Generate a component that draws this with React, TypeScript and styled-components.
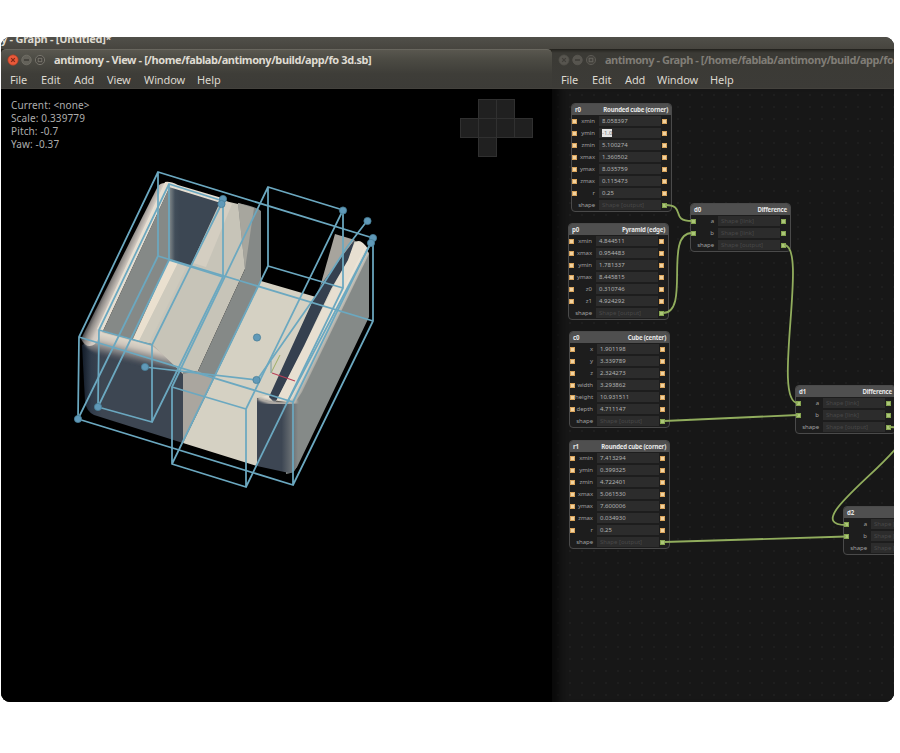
import React from "react";
import styled, { createGlobalStyle } from "styled-components";

const Global = createGlobalStyle`
  html, body { margin: 0; background: #fff; }
  body { font-family: "Noto Sans", "Open Sans", sans-serif; overflow: hidden; }
  * { box-sizing: border-box; }
`;

const Page = styled.div`
  width: 900px;
  height: 753px;
  padding: 37px 0 0 1px;
`;

const Desktop = styled.div`
  width: 893px;
  height: 665px;
  border-radius: 9px;
  overflow: hidden;
  background: #171717;
  display: flex;
  flex-direction: column;
`;

const HiddenTitle = styled.div`
  height: 12px;
  flex: none;
  overflow: hidden;
  background: linear-gradient(#504f49, #47453f);
  color: #dfdbd2;
  font-size: 11px;
  font-weight: 700;
  line-height: 15px;
  letter-spacing: -0.27px;
  white-space: pre;
  span { display: block; margin-top: -6px; }
`;

const Windows = styled.div`
  display: flex;
  flex: 1;
  min-height: 0;
  background: #27251f;
`;

const Window = styled.section<{ $width: number }>`
  width: ${(p) => p.$width}px;
  flex: none;
  display: flex;
  flex-direction: column;
  overflow: hidden;
`;

const Bars = styled.header<{ $active?: boolean }>`
  height: 40px;
  flex: none;
  background: ${(p) =>
    p.$active
      ? "linear-gradient(#59574f 0, #4b4a43 10px, #3e3d38 24px, #3c3b37 40px)"
      : "linear-gradient(#292823 0, #3b3a35 3px, #3c3b37 40px)"};
  border-radius: ${(p) => (p.$active ? "5px 5px 0 0" : "0")};
  border-top: 1px solid ${(p) => (p.$active ? "#68665e" : "#24231f")};
  border-bottom: 1px solid #44423d;
`;

const TitleBar = styled.div`
  display: flex;
  align-items: center;
  height: 20px;
  padding-left: 5px;
`;

const Buttons = styled.svg`
  width: 40px;
  height: 14px;
  flex: none;
`;

const Title = styled.div<{ $dim?: boolean }>`
  margin-left: 8px;
  white-space: nowrap;
  font-weight: 700;
  font-size: 11px;
  line-height: 14px;
  letter-spacing: ${(p) => (p.$dim ? "-0.47px" : "-0.41px")};
  color: ${(p) => (p.$dim ? "#807d76" : "#dfdbd2")};
`;

const Menu = styled.nav`
  display: flex;
  height: 19px;
  align-items: center;
  padding-left: 9px;
  color: #dcd8cf;
  font-size: 11px;
  line-height: 14px;
  letter-spacing: -0.1px;
`;

const MenuItem = styled.span<{ $w: number }>`
  width: ${(p) => p.$w}px;
  white-space: nowrap;
`;

const View = styled.div`
  position: relative;
  flex: 1;
  background: #000;
`;

const Info = styled.div`
  position: absolute;
  left: 10px;
  top: 10px;
  color: #adadad;
  font-size: 10px;
  line-height: 13px;
  letter-spacing: 0.13px;
  white-space: nowrap;
`;

const Scene = styled.svg`
  position: absolute;
  left: 0;
  top: 0;
`;

const Canvas = styled.div`
  position: relative;
  flex: 1;
  overflow: hidden;
  background-color: #171717;
  background-image: radial-gradient(circle, #1e1e1e 0.8px, transparent 1px);
  background-size: 12px 12px;
  box-shadow: inset 14px 0 9px -7px #090909;
`;

const Wires = styled.svg`
  position: absolute;
  left: 0;
  top: 0;
  pointer-events: none;
`;

const NodeBox = styled.article<{ $x: number; $y: number }>`
  position: absolute;
  left: ${(p) => p.$x - 552}px;
  top: ${(p) => p.$y - 89}px;
  width: 101px;
  border: 1px solid #4a4a4a;
  border-radius: 4px;
  background: #1d1d1d;
  overflow: hidden;
`;

const NodeHead = styled.div`
  display: flex;
  justify-content: space-between;
  align-items: center;
  height: 11px;
  padding: 0 3px 0 3px;
  background: #4f4f4f;
  color: #e6e6e6;
  font-size: 6.1px;
  font-weight: 700;
  line-height: 8px;
  letter-spacing: -0.2px;
  white-space: nowrap;
`;

const Row = styled.div`
  display: grid;
  grid-template-columns: 4px 19px 67px 5px;
  column-gap: 0;
  align-items: center;
  height: 12px;
`;

const Port = styled.i<{ $tone: "orange" | "green" | "none" }>`
  width: 5px;
  height: 5px;
  background: ${(p) => (p.$tone === "orange" ? "#f2d3a0" : p.$tone === "green" ? "#abc678" : "transparent")};
  box-shadow: inset 0 0 0 1px ${(p) => (p.$tone === "orange" ? "#dba55c" : p.$tone === "green" ? "#86a550" : "transparent")};
`;

const Label = styled.span`
  justify-self: end;
  color: #a0a0a0;
  font-size: 6px;
  line-height: 8px;
  letter-spacing: -0.05px;
  white-space: nowrap;
`;

const Field = styled.span<{ $empty?: boolean }>`
  display: flex;
  align-items: center;
  margin: 0 1px 0 4px;
  height: 10px;
  padding-left: 3px;
  background: #2c2c2c;
  color: ${(p) => (p.$empty ? "#484848" : "#b2b2b2")};
  font-size: 6px;
  line-height: 8px;
  white-space: nowrap;
`;

const Selected = styled.span`
  background: #e6e6e6;
  color: #777;
`;

type Entry = [string, string];
type NodeData = { id: string; kind: string; x: number; y: number; rows: Entry[]; shapes?: boolean };

const nodes: NodeData[] = [
  { id: "r0", kind: "Rounded cube (corner)", x: 571, y: 103, rows: [["xmin", "8.058397"], ["ymin", "-1.0"], ["zmin", "5.100274"], ["xmax", "1.360502"], ["ymax", "8.035759"], ["zmax", "0.115473"], ["r", "0.25"]] },
  { id: "p0", kind: "Pyramid (edge)", x: 568, y: 223, rows: [["xmin", "4.844511"], ["xmax", "0.954483"], ["ymin", "1.781337"], ["ymax", "8.445815"], ["z0", "0.310746"], ["z1", "4.924292"]] },
  { id: "c0", kind: "Cube (center)", x: 569, y: 331, rows: [["x", "1.901198"], ["y", "3.339789"], ["z", "2.324273"], ["width", "3.293862"], ["height", "10.931511"], ["depth", "4.711147"]] },
  { id: "r1", kind: "Rounded cube (corner)", x: 569, y: 440, rows: [["xmin", "7.413294"], ["ymin", "0.399325"], ["zmin", "4.722401"], ["xmax", "5.061530"], ["ymax", "7.600006"], ["zmax", "0.034930"], ["r", "0.25"]] },
  { id: "d0", kind: "Difference", x: 690, y: 203, shapes: true, rows: [["a", "Shape [link]"], ["b", "Shape [link]"]] },
  { id: "d1", kind: "Difference", x: 795, y: 385, shapes: true, rows: [["a", "Shape [link]"], ["b", "Shape [link]"]] },
  { id: "d2", kind: "Difference", x: 843, y: 506, shapes: true, rows: [["a", "Shape [link]"], ["b", "Shape [link]"]] },
];

function GraphNode({ node }: { node: NodeData }) {
  const tone = node.shapes ? "green" : "orange";
  return (
    <NodeBox $x={node.x} $y={node.y}>
      <NodeHead><span>{node.id}</span><span>{node.kind}</span></NodeHead>
      {node.rows.map(([name, value]) => (
        <Row key={name}>
          <Port $tone={tone} />
          <Label>{name}</Label>
          <Field $empty={node.shapes}>{value === "-1.0" ? <Selected>{value}</Selected> : value}</Field>
          <Port $tone={tone} />
        </Row>
      ))}
      <Row>
        <Port $tone="none" />
        <Label>shape</Label>
        <Field $empty>Shape [output]</Field>
        <Port $tone="green" />
      </Row>
    </NodeBox>
  );
}

function WindowButtons({ active }: { active?: boolean }) {
  const ring = active ? "#77746c" : "#5b5953";
  const mark = active ? "#77746c" : "#65635d";
  return (
    <Buttons viewBox="0 0 40 14">
      <circle cx="7" cy="7" r="5.2" fill={active ? "#e9593a" : "#57554f"} stroke={active ? "#a93f25" : "#4b4943"} strokeWidth=".7" />
      <path d="m5.2 5.2 3.6 3.6m0-3.6-3.6 3.6" stroke={active ? "#7c2818" : "#403e39"} strokeWidth="1.2" />
      <circle cx="20.5" cy="7" r="4.8" fill={active ? "#64625a" : "#57554f"} stroke={ring} strokeWidth=".7" />
      <path d="M18 7h5" stroke="#3d3b36" strokeWidth="1.3" />
      <circle cx="34" cy="7" r="4.6" fill="#44423d" stroke={ring} strokeWidth="1" />
      <rect x="32.2" y="5.3" width="3.6" height="3.4" fill="none" stroke={mark} strokeWidth="1" />
    </Buttons>
  );
}

const handles = [[78, 419], [98, 407], [145, 367], [223, 199], [221.5, 204], [343, 210.5], [367.5, 221], [373, 238], [371, 243], [257, 337.5], [256.5, 380]];

function Model() {
  return (
    <Scene width="551" height="613" viewBox="1 89 551 613">
      <defs>
        <linearGradient id="leftWall" gradientUnits="userSpaceOnUse" x1="117" y1="254" x2="137" y2="263">
          <stop offset="0" stopColor="#22242a" /><stop offset=".3" stopColor="#8d8986" /><stop offset=".6" stopColor="#d0c8c0" /><stop offset="1" stopColor="#e6dfd4" />
        </linearGradient>
        <linearGradient id="frontLeft" gradientUnits="userSpaceOnUse" x1="80" y1="0" x2="102" y2="0">
          <stop stopColor="#0c1420" /><stop offset=".5" stopColor="#303c4b" /><stop offset="1" stopColor="#3d4652" />
        </linearGradient>
        <linearGradient id="rim" gradientUnits="userSpaceOnUse" x1="130" y1="337" x2="125" y2="359">
          <stop stopColor="#e6dfd1" /><stop offset=".4" stopColor="#cdc5bb" /><stop offset="1" stopColor="#4a505a" />
        </linearGradient>
        <linearGradient id="frontRight" gradientUnits="userSpaceOnUse" x1="257" y1="0" x2="298" y2="0">
          <stop stopColor="#3d4653" /><stop offset=".6" stopColor="#3d4653" /><stop offset="1" stopColor="#858988" />
        </linearGradient>
        <linearGradient id="rightEdge" gradientUnits="userSpaceOnUse" x1="326" y1="326" x2="336" y2="331">
          <stop stopColor="#eee6d8" /><stop offset="1" stopColor="#898d8b" />
        </linearGradient>
        <linearGradient id="innerBack" gradientUnits="userSpaceOnUse" x1="170" y1="0" x2="180" y2="0">
          <stop stopColor="#7a8285" /><stop offset=".5" stopColor="#414d59" /><stop offset="1" stopColor="#3c4753" />
        </linearGradient>
        <filter id="soft" x="-10%" y="-10%" width="120%" height="120%"><feGaussianBlur stdDeviation="1.3" /></filter>
      </defs>

      <path d="M82 345 94 340 183 369V443L94 415Q86 411 85 401Z" fill="url(#frontLeft)" />
      <path d="M84 341 99 330 152 344 183 366V374L112 358Q85 352 84 341Z" fill="url(#rim)" filter="url(#soft)" />
      <path d="M158 186Q162 181 171 184L103 331 95 344Q87 350 81 339Z" fill="url(#leftWall)" />
      <path d="M165 182Q170 181 178 185L222 198 218 203 169 188 102 332 97 329Z" fill="#e6dfd2" />
      <path d="M169 188V260L133 339 103 331Z" fill="#858987" />
      <path d="M169 187 221 203 192 266 169 261Z" fill="url(#innerBack)" />
      <path d="M169 260 239 280 193 371 183 374 152 344 133 339Z" fill="#c9c6ba" />
      <path d="M169 260 178 263 139 341 133 339Z" fill="#eae0cf" />
      <path d="M178 263 187 266 149 343 139 341Z" fill="#cecabd" />
      <path d="M187 266 239 280 195 369 183 371 153 345Z" fill="#c9c5b9" />
      <path d="M203 270 222 276 181 354 170 351Z" fill="#d2cbbf" opacity=".5" />
      <path d="M221 200 238 204 253 208 245 269 198 371 184 371 153 345 191 265Z" fill="#c7c4b8" />
      <path d="M224 200 232 204 206 267 193 263Z" fill="#d4cec1" />
      <path d="M238 203Q257 207 261 211V282L183 443V372L198 371 245 269Z" fill="#858987" />
      <path d="M238 203 254 208 245 269Z" fill="#a7a69e" />
      <path d="M183 374 198 371 213 379 183 442Z" fill="#aaa69f" />
      <path d="M261 281 316 297 271 398 257 398V466L183 443Z" fill="#d5d1c3" />
      <path d="M335 234 355 240 324 287 318 294Z" fill="#a7a49d" />
      <path d="M316 296 353 241 361 242 307 350 275 403 257 398Z" fill="#d5d1c3" />
      <path d="M355 239 320 286 270 398 275 403Z" fill="#35404f" />
      <path d="M355 243Q360 237 368 249L293 403 257 398 270 395 275 402 317 320 345 263Z" fill="#e7dfd1" />
      <path d="M355 240 337 264 315 296 269 397 275 403 304 346 331 289 348 260Z" fill="#35404f" />
      <path d="M366 249 369 253V317L300 461Q295 474 286 474V405L293 401Z" fill="#858a88" />
      <path d="M365 247 369 254 302 392 293 406 287 401Z" fill="url(#rightEdge)" />
      <path d="M257 398Q275 404 298 403V463Q295 474 289 473L257 466Z" fill="url(#frontRight)" />
      <path d="M258 398Q277 407 297 401" fill="none" stroke="#b9b4ac" strokeWidth="4" filter="url(#soft)" />

      <g fill="none" stroke="#6ba8c0" strokeWidth="1.75" strokeLinejoin="round">
        <path d="M158 172 373 238 293 402 79 337ZM158 256 373 321 293 485 78 419ZM158 172V256M373 238V321M293 402V485M79 337 78 419" />
        <path d="M169 184 223 201 152 345 99 330ZM169 260 223 277 152 422 98 407ZM169 184V260M223 201V277M152 345V422M99 330 98 407" />
        <path d="M268 187 343 210 246 409 172 387ZM268 266 343 288 246 487 172 464ZM268 187V266M343 210V288M246 409V487M172 387V464" />
        <path d="M367 221 347 247 315 297 257 380 145 367M371 243 287 403" />
      </g>
      <path d="m271 373 9-18" stroke="#9faf65" fill="none" />
      <path d="m271 373 0-12" stroke="#789aa0" fill="none" />
      <path d="m272 373 23 8" stroke="#b94058" strokeWidth="1.2" fill="none" />
      <g fill="#6099b8" stroke="#477f98" strokeWidth=".8">
        {handles.map(([x, y]) => <circle key={`${x}-${y}`} cx={x} cy={y} r="3.6" />)}
      </g>

      <g fill="#202020" stroke="#303030" strokeWidth="1">
        <rect x="478.5" y="99.5" width="18" height="19" /><rect x="496.5" y="99.5" width="18" height="19" />
        <rect x="460.5" y="118.5" width="18" height="19" /><rect x="478.5" y="118.5" width="18" height="19" />
        <rect x="496.5" y="118.5" width="18" height="19" /><rect x="514.5" y="118.5" width="18" height="19" />
        <rect x="478.5" y="137.5" width="18" height="19" />
      </g>
    </Scene>
  );
}

export default function App() {
  return (
    <Page>
      <Global />
      <Desktop>
        <HiddenTitle><span>y - Graph - [Untitled]*</span></HiddenTitle>
        <Windows>
          <Window $width={551}>
            <Bars $active>
              <TitleBar>
                <WindowButtons active />
                <Title>antimony - View - [/home/fablab/antimony/build/app/fo 3d.sb]</Title>
              </TitleBar>
              <Menu>
                <MenuItem $w={31}>File</MenuItem><MenuItem $w={33}>Edit</MenuItem><MenuItem $w={33}>Add</MenuItem>
                <MenuItem $w={37}>View</MenuItem><MenuItem $w={53}>Window</MenuItem><MenuItem $w={30}>Help</MenuItem>
              </Menu>
            </Bars>
            <View>
              <Model />
              <Info>Current: &lt;none&gt;<br />Scale: 0.339779<br />Pitch: -0.7<br />Yaw: -0.37</Info>
            </View>
          </Window>
          <Window $width={342}>
            <Bars>
              <TitleBar>
                <WindowButtons />
                <Title $dim>antimony - Graph - [/home/fablab/antimony/build/app/fo</Title>
              </TitleBar>
              <Menu>
                <MenuItem $w={31}>File</MenuItem><MenuItem $w={33}>Edit</MenuItem><MenuItem $w={32}>Add</MenuItem>
                <MenuItem $w={53}>Window</MenuItem><MenuItem $w={30}>Help</MenuItem>
              </Menu>
            </Bars>
            <Canvas>
              {nodes.map((node) => <GraphNode key={node.id} node={node} />)}
              <Wires width="342" height="613" viewBox="552 89 342 613">
                <g fill="none" stroke="#91ad5d" strokeWidth="1.8">
                  <path d="M665 205C687 205 669 221 692 221" />
                  <path d="M663 313C691 313 663 233 692 233" />
                  <path d="M784 245C809 245 771 403 798 403" />
                  <path d="M664 421 798 415" />
                  <path d="M664 542 846 536.5" />
                  <path d="M889 427C952 427 786 525 846 525" />
                </g>
              </Wires>
            </Canvas>
          </Window>
        </Windows>
      </Desktop>
    </Page>
  );
}
